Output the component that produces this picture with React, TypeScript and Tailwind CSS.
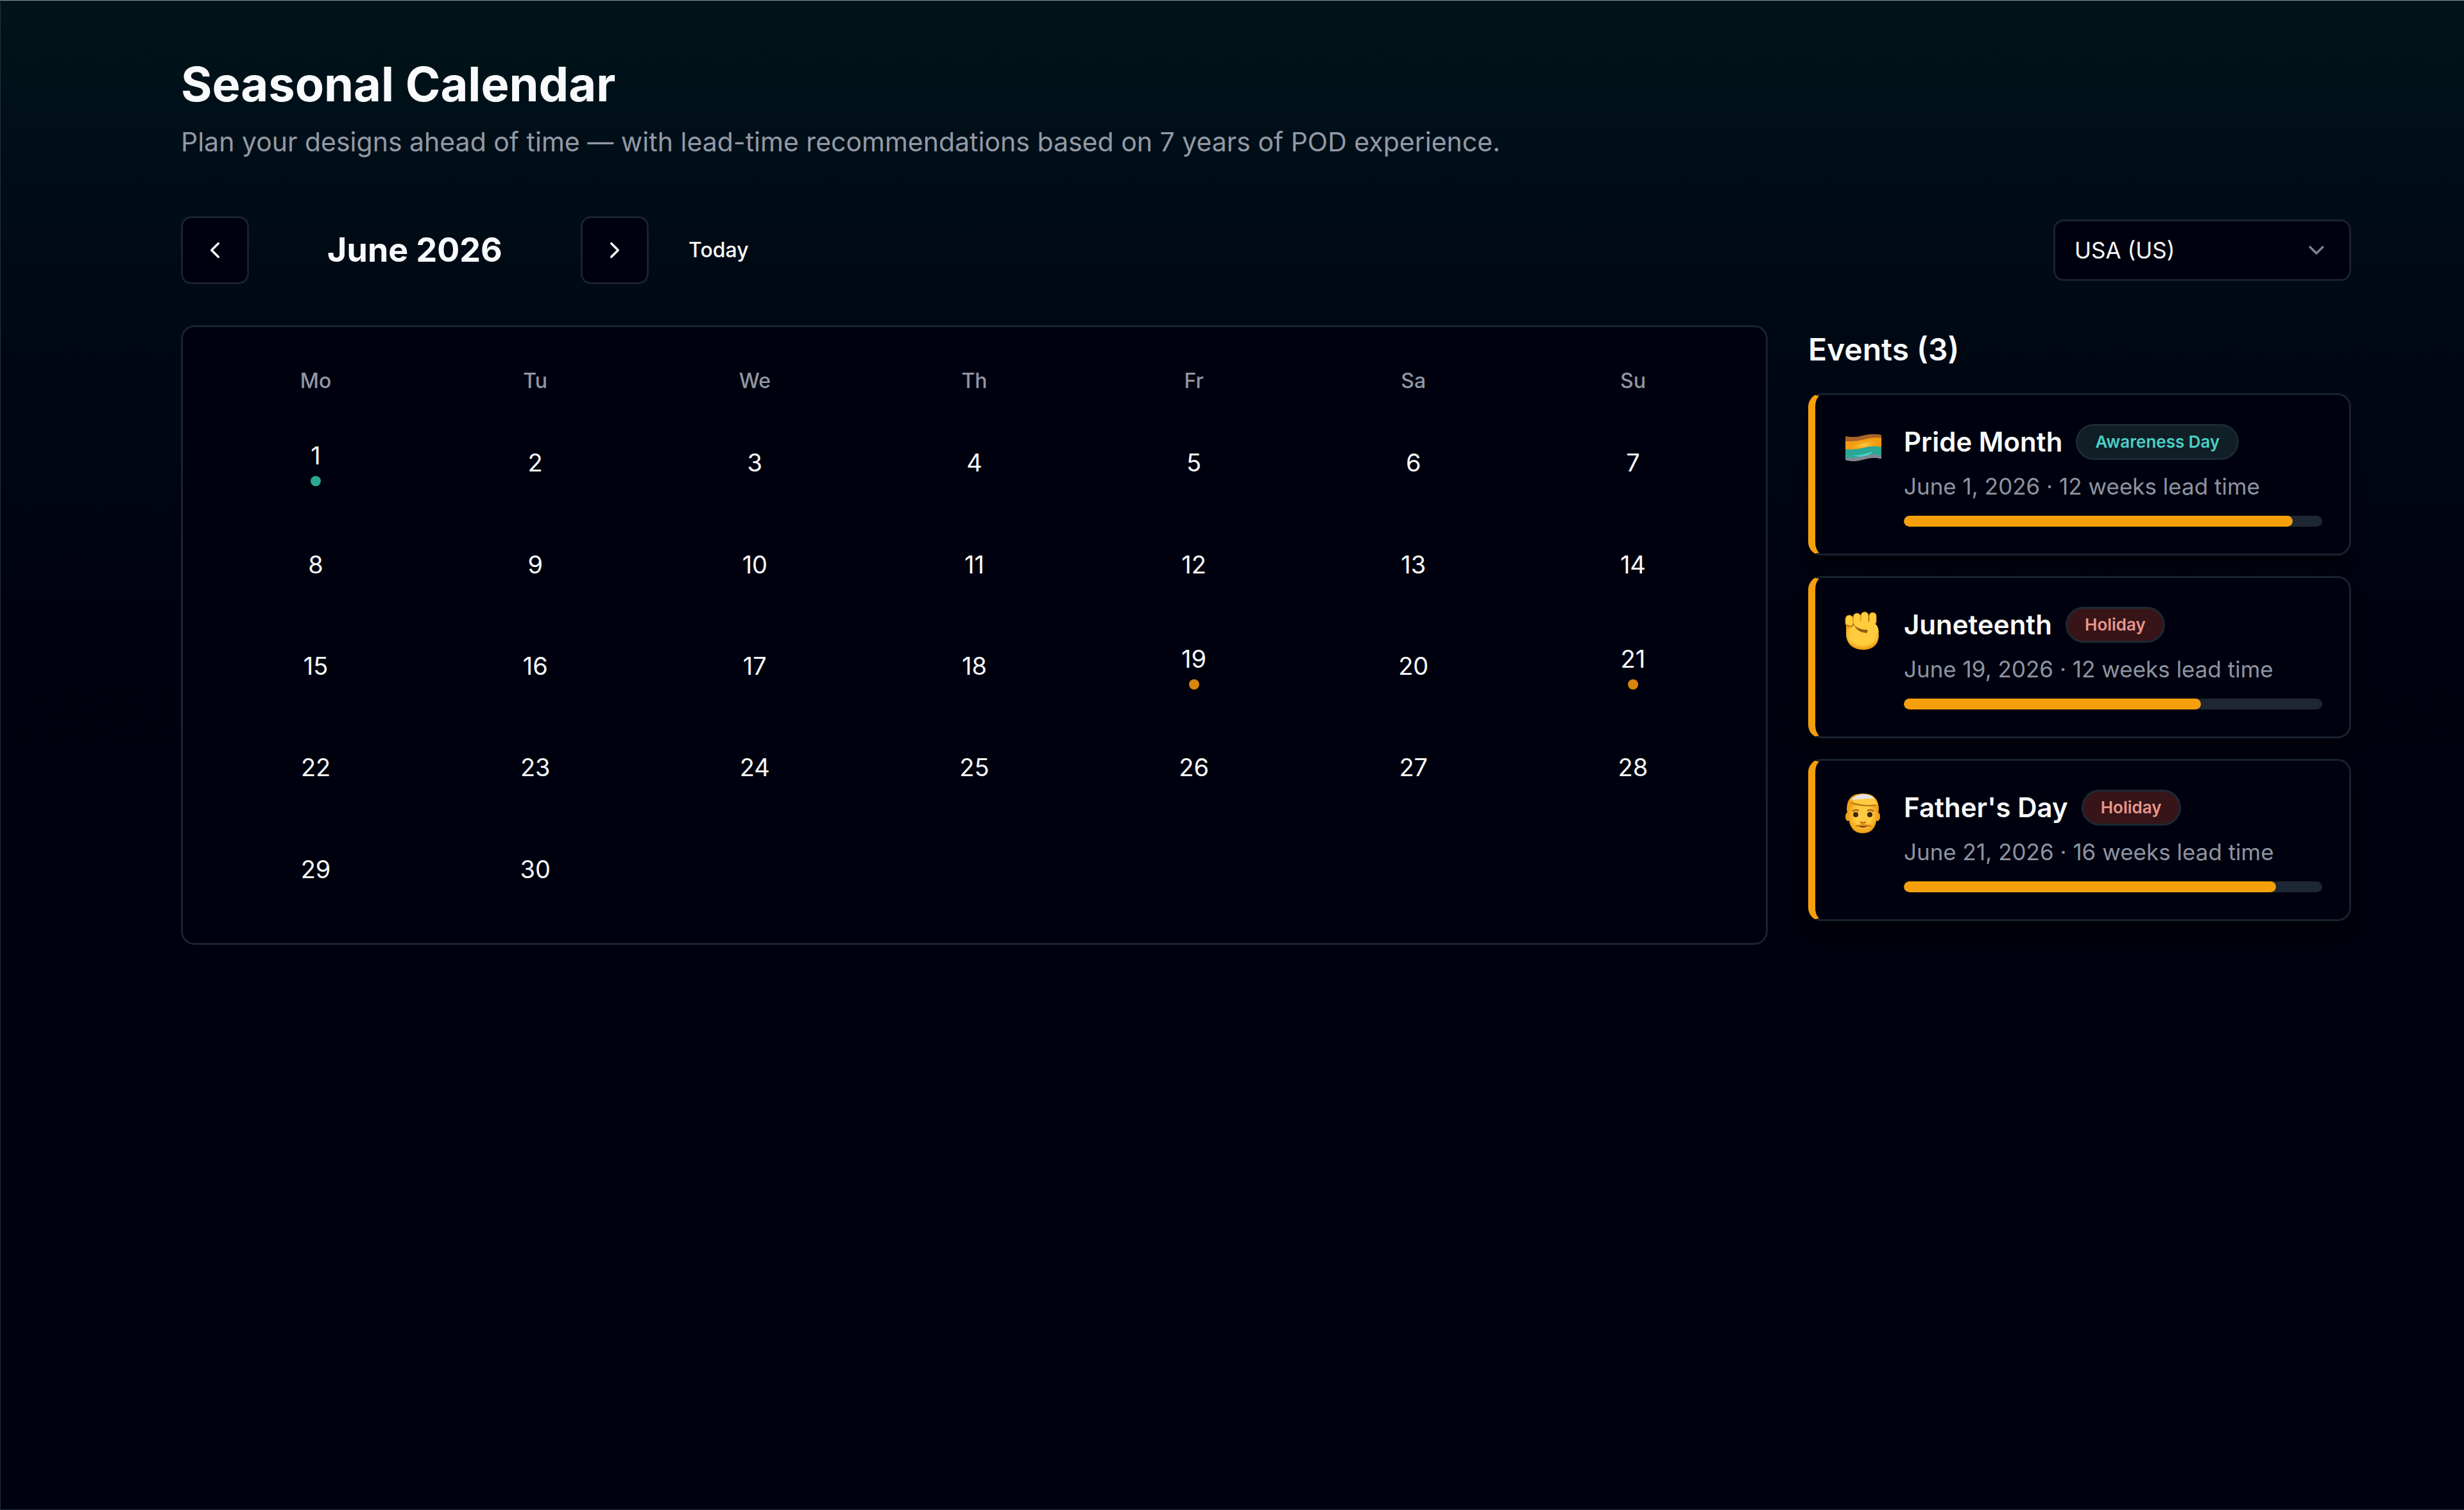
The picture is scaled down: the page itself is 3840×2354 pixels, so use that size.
import React, { useState } from 'react';
import { ChevronDown, ChevronLeft, ChevronRight } from 'lucide-react';

type CalendarEvent = {
  name: string;
  kind: 'Awareness Day' | 'Holiday';
  day: number;
  weeks: number;
  progress: number;
  icon: React.ReactNode;
};

const PrideFlag = () => (
  <svg viewBox="0 3 60 64" className="w-[60px] h-16" aria-hidden="true">
    <defs>
      <clipPath id="flag">
        <path d="M3 17 Q17 20 30 16 Q45 12 59 15 V52 Q45 49 32 53 Q17 58 3 54 Z" />
      </clipPath>
      <radialGradient id="flagGlow">
        <stop offset="0" stopColor="#ffd24a" />
        <stop offset="1" stopColor="#f5a00b" stopOpacity="0" />
      </radialGradient>
    </defs>
    <g clipPath="url(#flag)">
      <rect width="60" height="64" fill="#a8642b" />
      <path d="M0 25 Q17 26 32 22 Q46 18 60 20 V64 H0 Z" fill="#f39c12" />
      <ellipse cx="32" cy="31" rx="24" ry="8" fill="url(#flagGlow)" transform="rotate(-10 32 31)" />
      <path d="M0 37 Q17 39 32 35 Q46 31 60 34 V64 H0 Z" fill="#2ba894" />
      <path d="M14 47 Q28 47 45 41 Q40 50 24 49 Z" fill="#4fd0c8" />
      <path d="M0 50 Q17 52 32 48 Q46 44 60 47 V64 H0 Z" fill="#7f8795" />
    </g>
  </svg>
);

const Fist = () => (
  <svg viewBox="0 0 60 64" className="w-[60px] h-16" aria-hidden="true">
    <defs>
      <radialGradient id="fistSkin" cx="0.5" cy="0.4" r="0.6">
        <stop offset="0.65" stopColor="#ffcc3d" />
        <stop offset="1" stopColor="#e8960f" />
      </radialGradient>
    </defs>
    <path d="M4 23 H48 Q56 30 55 42 Q52 62 30 62 Q7 61 4 40 Z" fill="url(#fistSkin)" />
    <g fill="#ffcc3d" stroke="#d9890f" strokeWidth="1">
      <rect x="3" y="8" width="12" height="18" rx="6" />
      <rect x="15" y="5" width="12" height="20" rx="6" />
      <rect x="27" y="3" width="12" height="20" rx="6" />
      <rect x="40" y="4" width="11" height="19" rx="5" />
    </g>
    <path d="M17 24 Q18 18 28 18 H43 Q54 21 55 34 L45 42 L26 33 Z" fill="#ffcc3d" />
    <path d="M5 23 Q10 28 16 23" fill="none" stroke="#c8790c" strokeWidth="2" />
    <path d="M17 23 Q21 30 38 31 L36 36 Q20 34 17 23 Z" fill="#8f5a10" />
  </svg>
);

const ManFace = () => (
  <svg viewBox="0 0 60 64" className="w-[60px] h-16" aria-hidden="true">
    <defs>
      <radialGradient id="faceSkin" cx="0.5" cy="0.45" r="0.6">
        <stop offset="0.5" stopColor="#ffcb42" />
        <stop offset="1" stopColor="#e8940c" />
      </radialGradient>
    </defs>
    <ellipse cx="7" cy="37" rx="4" ry="7" fill="#eea01c" />
    <ellipse cx="53" cy="37" rx="4" ry="7" fill="#eea01c" />
    <path d="M5 26 Q5 1 30 1 Q55 1 55 26 L53 36 H7 Z" fill="#eda317" />
    <path d="M8 27 Q9 12 30 12 Q51 12 52 27 V38 Q50 63 30 63 Q10 63 8 38 Z" fill="url(#faceSkin)" />
    <path d="M12 15 Q20 2 37 4 Q51 7 52 20 Q33 22 12 15 Z" fill="#ffcb42" />
    <path d="M11 12 Q18 2 32 2 Q44 3 48 9 Q36 8 28 10 Q18 9 11 12 Z" fill="#e3e3e8" />
    <path d="M12 15 Q28 22 51 19" fill="none" stroke="#b87413" strokeWidth="2" />
    <path d="M14 29 Q18 25 24 28 M37 28 Q43 25 47 29" fill="none" stroke="#b87413" strokeWidth="3" />
    <circle cx="19" cy="34" r="4" fill="#40260c" />
    <circle cx="41" cy="34" r="4" fill="#40260c" />
    <path d="M27 46 Q30 48 34 46" fill="none" stroke="#c8790c" strokeWidth="3" strokeLinecap="round" />
    <path d="M19 52 Q30 49 43 52" fill="none" stroke="#d38719" strokeWidth="3" />
    <path d="M23 52 H38 Q30 56 23 52 Z" fill="#6e2d17" />
  </svg>
);

const weekdays = ['Mo', 'Tu', 'We', 'Th', 'Fr', 'Sa', 'Su'];

const days = Array.from({ length: 30 }, (_, i) => i + 1);

const events: CalendarEvent[] = [
  { name: 'Pride Month', kind: 'Awareness Day', day: 1, weeks: 12, progress: 93, icon: <PrideFlag /> },
  { name: 'Juneteenth', kind: 'Holiday', day: 19, weeks: 12, progress: 71, icon: <Fist /> },
  { name: "Father's Day", kind: 'Holiday', day: 21, weeks: 16, progress: 89, icon: <ManFace /> },
];

const badgeStyles = {
  'Awareness Day': 'bg-[#101e25] text-[#4bd0c6]',
  Holiday: 'bg-[#371418] text-[#e8958a]',
};

const dotStyles = {
  'Awareness Day': 'bg-[#2ba894]',
  Holiday: 'bg-[#d9860f]',
};

const DayCell = ({ day }: { day: number }) => {
  const event = events.find((e) => e.day === day);
  return (
    <button type="button" className="flex flex-col items-center justify-center gap-1.5 rounded-2xl text-[38px] leading-[52px] hover:bg-white/5">
      <span>{day}</span>
      {event && <span className={`size-4 rounded-full ${dotStyles[event.kind]}`}></span>}
    </button>
  );
};

const EventCard = ({ event }: { event: CalendarEvent }) => (
  <li className="flex gap-[34px] rounded-[21px] border-[3px] border-l-[11px] border-[#18232e] border-l-[#f5a00b] bg-[#00010e] p-[42px] pl-11 shadow-xl shadow-black/40">
    <div className="shrink-0 pt-2">{event.icon}</div>
    <div className="flex-1 min-w-0">
      <div className="flex items-center gap-[21px]">
        <h3 className="text-[42px] leading-[62px] font-semibold whitespace-nowrap">{event.name}</h3>
        <span className={`rounded-full border-[3px] border-[#1b2a33] px-[27px] text-[26px] leading-[50px] font-semibold whitespace-nowrap ${badgeStyles[event.kind]}`}>
          {event.kind}
        </span>
      </div>
      <p className="mt-3 text-[35px] leading-[52px] text-[#8d94a1] whitespace-nowrap">
        June {event.day}, 2026 · {event.weeks} weeks lead time
      </p>
      <div className="mt-5 h-[17px] rounded-full bg-[#1d2733] overflow-hidden">
        <div className="h-full rounded-full bg-[#f5a00b]" style={{ width: `${event.progress}%` }}></div>
      </div>
    </div>
  </li>
);

const App: React.FC = () => {
  const [country, setCountry] = useState('us');

  return (
    <div className="min-h-screen border-y border-l border-[#26303a] border-t-[#8a9798] bg-[#00010e] bg-[linear-gradient(to_bottom,#011519_0%,#000f18_8%,#000814_22%,#00030f_40%,#00010e_55%)] pl-[281px] pr-[176px] pt-[82px] pb-24 font-[Inter,sans-serif] text-[#f8fafc]">
      <header>
        <h1 className="text-[74px] leading-[96px] font-bold">Seasonal Calendar</h1>
        <p className="mt-3 text-[41px] leading-[60px] text-[#9399a6]">
          Plan your designs ahead of time — with lead-time recommendations based on 7 years of POD experience.
        </p>
      </header>

      {/* Month navigation and country */}
      <div className="mt-[86px] flex items-center justify-between">
        <div className="flex items-center gap-8">
          <button type="button" aria-label="Previous month" className="flex size-[106px] items-center justify-center rounded-2xl border-[3px] border-[#18232e] bg-[#00010e]">
            <ChevronLeft className="size-[42px]" />
          </button>
          <h2 className="w-[453px] text-center text-[52px] leading-[72px] font-bold">June 2026</h2>
          <button type="button" aria-label="Next month" className="flex size-[106px] items-center justify-center rounded-2xl border-[3px] border-[#18232e] bg-[#00010e]">
            <ChevronRight className="size-[42px]" />
          </button>
          <button type="button" className="px-[30px] text-[32px] leading-[52px] font-medium">Today</button>
        </div>

        <div className="relative">
          <select
            aria-label="Country"
            value={country}
            onChange={(e) => setCountry(e.target.value)}
            className="h-24 w-[464px] appearance-none rounded-2xl border-[3px] border-[#18232e] bg-[#00010e] px-[30px] text-[35px]"
          >
            <option value="us">USA (US)</option>
          </select>
          <ChevronDown className="pointer-events-none absolute top-7 right-[34px] size-10 text-[#7d8390]" />
        </div>
      </div>

      <div className="mt-16 flex items-start gap-[63px]">
        {/* Calendar */}
        <section className="flex min-h-[966px] flex-1 flex-col rounded-[21px] border-[3px] border-[#18232e] bg-[#00010e] p-9">
          <div className="grid grid-cols-7">
            {weekdays.map((name) => (
              <div key={name} className="text-center text-[32px] leading-[96px] font-medium text-[#9097a4]">{name}</div>
            ))}
          </div>
          <div className="grid flex-1 grid-cols-7 auto-rows-fr">
            {days.map((day) => (
              <DayCell key={day} day={day} />
            ))}
          </div>
        </section>

        {/* Events of the month */}
        <aside className="w-[846px] shrink-0">
          <h2 className="text-[48px] leading-[76px] font-semibold">Events ({events.length})</h2>
          <ul className="mt-[30px] flex flex-col gap-8">
            {events.map((event) => (
              <EventCard key={event.name} event={event} />
            ))}
          </ul>
        </aside>
      </div>
    </div>
  );
};

export default App;
